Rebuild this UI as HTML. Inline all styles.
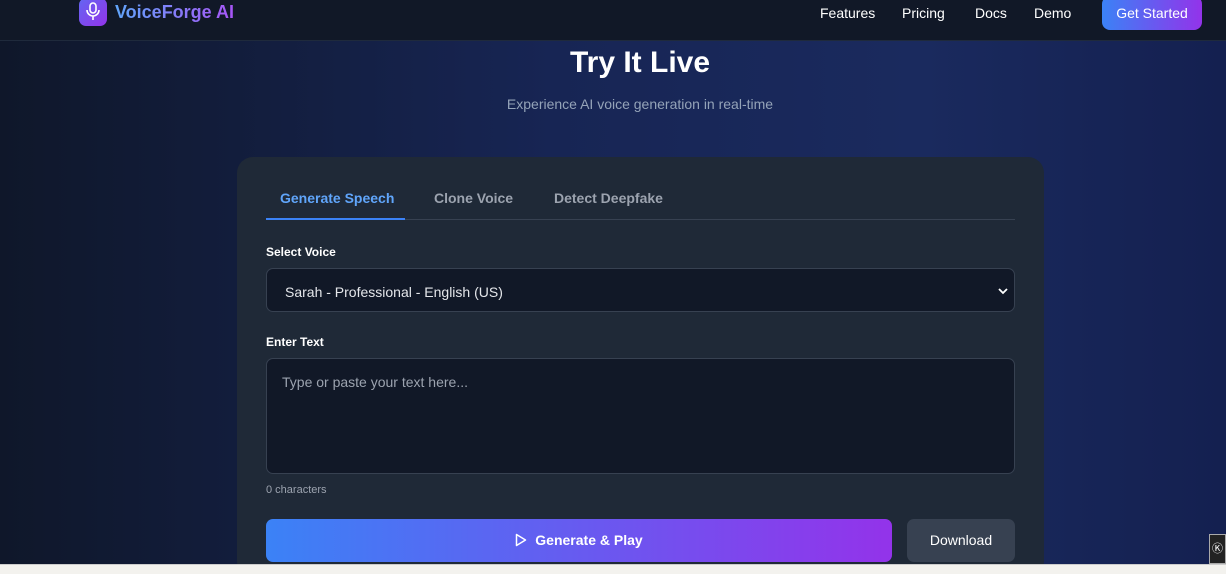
<!DOCTYPE html>
<html><head><meta charset="utf-8"><style>
*{box-sizing:border-box;margin:0;padding:0}
html,body{width:1226px;height:574px;overflow:hidden}
body{font-family:"Liberation Sans","DejaVu Sans",sans-serif;background:linear-gradient(90deg,#0f172a 0%,#172554 45%,#1a2a5e 75%,#142050 100%);position:relative;color:#fff}
.hdr{position:absolute;left:0;top:0;width:1226px;height:41px;background:#111827;border-bottom:1px solid #1f2a3c}
.logo{position:absolute;left:79px;top:-2px;width:28px;height:28px;border-radius:7px;background:linear-gradient(135deg,#6366f1,#9333ea)}
.brand{position:absolute;left:115px;top:2px;font-size:18px;font-weight:bold;background:linear-gradient(90deg,#60a5fa,#a855f7);-webkit-background-clip:text;color:transparent}
.nav{position:absolute;top:5px;font-size:14px;color:#fff}
.gs{position:absolute;left:1102px;top:-4px;width:100px;height:34px;border-radius:8px;background:linear-gradient(90deg,#3b82f6,#9333ea);font-size:14px;text-align:center;line-height:34px;padding-top:0}
h1{position:absolute;left:0;width:1280px;text-align:center;top:46px;font-size:30px}
.sub{position:absolute;left:0;width:1280px;text-align:center;top:96px;font-size:14px;color:#94a3b8}
.card{position:absolute;left:237px;top:157px;width:807px;height:420px;border-radius:16px;background:#1f2937}
.tab{position:absolute;top:190px;font-size:14px;font-weight:bold;color:#9ca3af}
.lbl{position:absolute;left:266px;font-size:12px;font-weight:bold}
.box{position:absolute;left:266px;width:749px;background:#111827;border:1px solid #374151;border-radius:7px}
.bot{position:absolute;left:0;top:564px;width:1226px;height:10px;background:#f3f2ee;border-top:1px solid #ccc}
</style></head><body>
<div class="hdr">
<div class="logo"><svg width="28" height="28" viewBox="0 0 28 28"><rect x="11" y="5" width="6" height="10" rx="3" fill="none" stroke="#fff" stroke-width="1.6"/><path d="M8 12a6 6 0 0 0 12 0M14 18v4" fill="none" stroke="#fff" stroke-width="1.6"/></svg></div>
<div class="brand">VoiceForge AI</div>
<div class="nav" style="left:820px">Features</div>
<div class="nav" style="left:902px">Pricing</div>
<div class="nav" style="left:975px">Docs</div>
<div class="nav" style="left:1034px">Demo</div>
<div class="gs">Get Started</div>
</div>
<h1>Try It Live</h1>
<div class="sub">Experience AI voice generation in real-time</div>
<div class="card"></div>
<div class="tab" style="left:280px;color:#60a5fa">Generate Speech</div>
<div style="position:absolute;left:266px;top:219px;width:749px;height:1px;background:#374151"></div>
<div style="position:absolute;left:266px;top:218px;width:139px;height:2px;background:#3b82f6"></div>
<div class="tab" style="left:434px">Clone Voice</div>
<div class="tab" style="left:554px">Detect Deepfake</div>
<div class="lbl" style="top:245px">Select Voice</div>
<div class="box" style="top:268px;height:44px"><span style="position:absolute;left:18px;top:15px;font-size:14px;color:#e5e7eb">Sarah - Professional - English (US)</span><svg style="position:absolute;right:6px;top:18px" width="10" height="8" viewBox="0 0 10 8"><path d="M1 2l4 4 4-4" fill="none" stroke="#fff" stroke-width="1.8"/></svg></div>
<div class="lbl" style="top:335px">Enter Text</div>
<div class="box" style="top:358px;height:116px"><span style="position:absolute;left:15px;top:15px;font-size:14px;color:#9ca3af">Type or paste your text here...</span></div>
<div style="position:absolute;left:266px;top:484px;font-size:11px;color:#9ca3af">0 characters</div>
<div style="position:absolute;left:266px;top:519px;width:626px;height:43px;border-radius:7px;background:linear-gradient(90deg,#3b82f6,#9333ea);font-size:14px;font-weight:bold;text-align:center;line-height:43px"><svg style="vertical-align:-2px;margin-right:8px" width="12" height="14" viewBox="0 0 12 14"><path d="M1.5 1.5v11l9-5.5z" fill="none" stroke="#fff" stroke-width="1.5" stroke-linejoin="round"/></svg>Generate &amp; Play</div>
<div style="position:absolute;left:907px;top:519px;width:108px;height:43px;border-radius:7px;background:#374151;font-size:14px;text-align:center;line-height:43px">Download</div>
<div class="bot"></div>
<div style="position:absolute;left:1209px;top:534px;width:17px;height:30px;background:#222;border:1px solid #aaa;color:#fff;font-size:11px;text-align:center;line-height:28px">Ⓚ</div>
</body></html>
